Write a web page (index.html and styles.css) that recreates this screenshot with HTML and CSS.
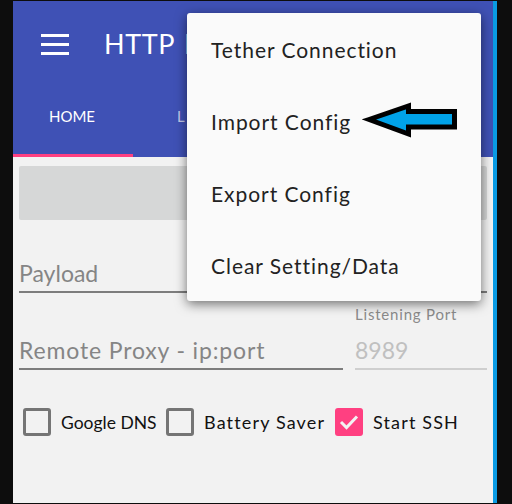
FILE: index.html
```html
<!DOCTYPE html>
<html lang="en">
<head>
<meta charset="utf-8">
<title>HTTP I</title>
<link rel="stylesheet" href="styles.css">
</head>
<body>
<div class="frame">
  <div class="screen">
    <header class="appbar">
      <div class="toolbar">
        <svg class="burger" width="28" height="20" viewBox="0 0 28 20"><path d="M0 0h28v3H0zM0 9h28v3H0zM0 18h28v3H0z" fill="#fff"/></svg>
        <span class="title">HTTP I</span>
      </div>
      <nav class="tabs">
        <div class="tab active">HOME</div>
        <div class="tab dim">L</div>
      </nav>
    </header>
    <main class="content">
      <div class="button"></div>
      <div class="field wide"><span class="hint">Payload</span></div>
      <div class="row">
        <div class="field proxy"><span class="hint spaced">Remote Proxy - ip:port</span></div>
        <div class="port">
          <span class="port-label">Listening Port</span>
          <div class="field port-field"><span class="hint disabled">8989</span></div>
        </div>
      </div>
      <div class="checks">
        <label class="check first"><span class="box"></span>Google DNS</label>
        <label class="check second"><span class="box"></span>Battery Saver</label>
        <label class="check third"><span class="box on"><svg width="20" height="16" viewBox="0 0 20 16"><path d="M2 8l5.500 5.500L18 2.500" fill="none" stroke="#f3f3f3" stroke-width="3"/></svg></span>Start SSH</label>
      </div>
    </main>
    <div class="menu">
      <div class="item">Tether Connection</div>
      <div class="item">Import Config</div>
      <div class="item">Export Config</div>
      <div class="item">Clear Setting/Data</div>
    </div>
    <svg class="arrow" width="96" height="36" viewBox="0 0 96 36"><path d="M7 17.500L46.500 4V9.500H92.500V25H46.500V32Z" fill="#00a2e8" stroke="#000" stroke-width="5"/></svg>
  </div>
  <div class="edge"></div>
</div>
</body>
</html>
```

FILE: styles.css
```css
* { box-sizing: border-box; }
html, body { margin: 0; padding: 0; background: #0d0d0d; }
body { width: 512px; height: 504px; overflow: hidden; font-family: "Lato", "Open Sans", sans-serif; }
.frame { display: flex; width: 512px; height: 503px; padding: 1px 15px 0 13px; background: #0d0d0d; }
.screen { position: relative; width: 480px; height: 502px; background: #f2f2f2; }
.edge { width: 4px; background: #0a9be4; }
.appbar { height: 156px; background: #3f51b5; display: flex; flex-direction: column; }
.toolbar { height: 85px; display: flex; align-items: center; padding: 0 0 0 28px; }
.burger { overflow: visible; margin-top: 1px; }
.title { margin-left: 35px; color: #fff; font-size: 27px; white-space: nowrap; letter-spacing: .6px; word-spacing: 2px; }
.tabs { height: 71px; display: flex; }
.tab { width: 120px; height: 71px; padding: 21px 2px 0 0; text-align: center; color: #fff; font-size: 15px; }
.tab.active { border-bottom: 3px solid #ff4081; }
.tab.dim { width: auto; margin-left: 44px; padding-right: 0; color: rgba(255,255,255,.7); }
.content { padding: 9px 6px 0; }
.button { height: 54px; border-radius: 2px; background: #d6d7d7; }
.field { border-bottom: 2px solid #7d7d7d; height: 37px; font-size: 23px; color: #858585; }
.wide { margin-top: 36px; }
.row { display: flex; justify-content: space-between; align-items: flex-end; margin-top: 40px; }
.proxy { width: 324px; }
.port { width: 132px; display: flex; flex-direction: column; }
.port-label { font-size: 15px; color: #8a8a8a; height: 20px; margin-top: -28px; margin-bottom: 8px; letter-spacing: .8px; white-space: nowrap; }
.port-field { border-bottom-color: #cfcfcf; }
.hint { display: block; line-height: 34px; white-space: nowrap; }
.hint.spaced { letter-spacing: .85px; }
.hint.disabled { color: #c0c0c0; }
.checks { display: flex; margin-top: 38px; padding-left: 4px; }
.check { display: flex; align-items: center; height: 28px; font-size: 18px; color: #111; white-space: nowrap; }
.first { width: 143px; font-size: 17.500px; }
.second { width: 169px; letter-spacing: 1.150px; }
.third { letter-spacing: 1.150px; }
.box { display: flex; flex: none; align-items: center; justify-content: center; width: 28px; height: 28px; margin-right: 10px; border: 3px solid #757575; border-radius: 3px; }
.box.on { background: #ff4081; border: 0; }
.menu { position: absolute; left: 174px; top: 12px; width: 294px; height: 288px; background: #fafafa; border-radius: 3px; box-shadow: 0 3px 12px rgba(0,0,0,.55); display: flex; flex-direction: column; }
.item { height: 72px; display: flex; align-items: center; padding-left: 24px; font-size: 21px; color: #222; letter-spacing: .95px; }
.arrow { position: absolute; left: 349px; top: 101px; }
```
